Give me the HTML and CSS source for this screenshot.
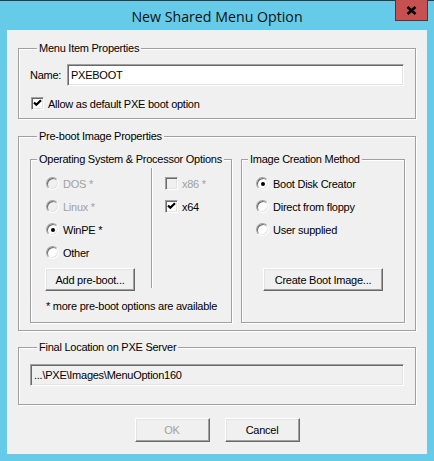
FILE: index.html
```html
<!DOCTYPE html>
<html>
<head>
<meta charset="utf-8">
<title>New Shared Menu Option</title>
<link rel="stylesheet" href="styles.css">
</head>
<body>
<div class="window">
  <div class="titlebar">
    <span class="title">New Shared Menu Option</span>
    <div class="close">
      <svg width="11" height="9" viewBox="0 0 11 9"><path d="M1.5 1 L9.5 8 M9.5 1 L1.5 8" stroke="#000" stroke-width="2.6" fill="none"/></svg>
    </div>
  </div>
  <div class="client">
    <div class="group g-menu">
      <div class="legend">Menu Item Properties</div>
      <div class="name-row">
        <span class="name-label">Name:</span>
        <div class="textbox">PXEBOOT</div>
      </div>
      <div class="check-row">
        <span class="checkbox"><svg width="9" height="9" viewBox="0 0 9 9"><path d="M1 3.5 L3.3 5.8 L8 1.2" stroke="#000" stroke-width="2.2" fill="none"/></svg></span>
        <span>Allow as default PXE boot option</span>
      </div>
    </div>

    <div class="group g-preboot">
      <div class="legend">Pre-boot Image Properties</div>
      <div class="subgroups">
        <div class="group g-os">
          <div class="legend sub">Operating System &amp; Processor Options</div>
          <div class="os-grid">
            <div class="os-left">
              <div class="opt disabled"><span class="radio"></span>DOS *</div>
              <div class="opt disabled"><span class="radio"></span>Linux *</div>
              <div class="opt"><span class="radio on"></span>WinPE *</div>
              <div class="opt"><span class="radio"></span>Other</div>
              <div class="btn btn-add">Add pre-boot...</div>
            </div>
            <div class="os-right">
              <div class="opt disabled"><span class="checkbox off"></span>x86 *</div>
              <div class="opt"><span class="checkbox"><svg width="9" height="9" viewBox="0 0 9 9"><path d="M1 3.5 L3.3 5.8 L8 1.2" stroke="#000" stroke-width="2.2" fill="none"/></svg></span>x64</div>
            </div>
          </div>
          <div class="note">* more pre-boot options are available</div>
        </div>
        <div class="group g-image">
          <div class="legend sub">Image Creation Method</div>
          <div class="image-col">
            <div class="opt"><span class="radio on"></span>Boot Disk Creator</div>
            <div class="opt"><span class="radio"></span>Direct from floppy</div>
            <div class="opt"><span class="radio"></span>User supplied</div>
            <div class="btn btn-create">Create Boot Image...</div>
          </div>
        </div>
      </div>
    </div>

    <div class="group g-final">
      <div class="legend">Final Location on PXE Server</div>
      <div class="textbox readonly">...\PXE\Images\MenuOption160</div>
    </div>

    <div class="buttons">
      <div class="btn btn-dlg disabled">OK</div>
      <div class="btn btn-dlg">Cancel</div>
    </div>
  </div>
</div>
</body>
</html>
```

FILE: styles.css
```css
* { box-sizing: border-box; }

html, body {
  margin: 0;
  padding: 0;
  background: #65cbe9;
}

body {
  font-family: "Liberation Sans", Arial, sans-serif;
  font-size: 11px;
  letter-spacing: -0.25px;
  color: #000;
}

.window {
  position: relative;
  width: 434px;
  height: 461px;
  background: #65cbe9;
  border-top: 1px solid #2e3a40;
}

.titlebar {
  height: 29px;
  display: flex;
  align-items: center;
  justify-content: center;
}

.title {
  font-family: "Open Sans", "Noto Sans", sans-serif;
  font-size: 14.2px;
  letter-spacing: 0;
  color: #111;
  padding-top: 2px;
}

.close {
  position: absolute;
  top: -1px;
  right: 6px;
  width: 33px;
  height: 21px;
  background: #c75050;
  border: 1px solid #5e3030;
  border-top: none;
  display: flex;
  align-items: center;
  justify-content: center;
}

.client {
  margin: 0 7px;
  height: 424px;
  background: #f0f0f0;
  padding: 18px 11px 0 11px;
  overflow: hidden;
}

/* group boxes */
.group {
  border: 1px solid #a0a0a0;
  box-shadow: inset 1px 1px 0 #fff, 1px 1px 0 #fff;
}

.legend {
  width: fit-content;
  height: 13px;
  line-height: 13px;
  margin: -7px 0 0 7px;
  padding: 0 2px;
  background: #f0f0f0;
  white-space: nowrap;
}

.legend.sub {
  margin-left: 6px;
}

/* Menu item group */
.g-menu {
  padding: 0 11px 8px 11px;
}

.name-row {
  display: flex;
  align-items: center;
  margin-top: 9px;
  height: 22px;
}

.name-label {
  width: 37px;
  flex: none;
}

.textbox {
  flex: 1;
  height: 22px;
  line-height: 20px;
  padding: 0 3px;
  background: #fff;
  border: 1px solid;
  border-color: #a0a0a0 #fff #fff #a0a0a0;
  box-shadow: inset 1px 1px 0 #696969, inset -1px -1px 0 #e3e3e3;
  white-space: nowrap;
}

.textbox.readonly {
  background: #f0f0f0;
  margin-top: 10px;
}

.check-row {
  display: flex;
  align-items: center;
  height: 13px;
  margin-top: 11px;
  padding-left: 1px;
}

.checkbox {
  flex: none;
  width: 13px;
  height: 13px;
  margin-right: 4px;
  background: #fff;
  border: 1px solid;
  border-color: #a0a0a0 #fff #fff #a0a0a0;
  box-shadow: inset 1px 1px 0 #696969, inset -1px -1px 0 #e3e3e3;
  display: flex;
  align-items: center;
  justify-content: center;
}

.checkbox svg {
  display: block;
}

.checkbox.off {
  background: #f0f0f0;
}

.radio {
  flex: none;
  width: 13px;
  height: 13px;
  margin-right: 4px;
  border-radius: 50%;
  background: #fff;
  border: 1px solid;
  border-color: #a0a0a0 #fff #fff #a0a0a0;
  box-shadow: inset 1px 1px 0 #696969, inset -1px -1px 0 #e3e3e3;
  display: flex;
  align-items: center;
  justify-content: center;
}

.radio.on::after {
  content: "";
  width: 4px;
  height: 4px;
  border-radius: 50%;
  background: #000;
}

.disabled {
  color: #a0a0a0;
}

.disabled .radio {
  background: #f0f0f0;
}

/* Pre-boot group */
.g-preboot {
  margin-top: 17px;
  padding: 0 10px 7px 11px;
}

.subgroups {
  display: flex;
  gap: 9px;
  margin-top: 16px;
}

.g-os {
  width: 202px;
  flex: none;
  padding-bottom: 9px;
}

.os-grid {
  display: flex;
  margin-top: 2px;
}

.os-left {
  width: 120px;
  padding: 4px 0 0 15px;
}

.opt {
  display: flex;
  align-items: center;
  height: 23px;
  white-space: nowrap;
}

.os-right {
  height: 120px;
  padding: 4px 0 0 13px;
  border-left: 1px solid #a0a0a0;
  box-shadow: inset 1px 0 0 #fff;
}

.note {
  margin-top: 9px;
  padding-left: 15px;
  height: 13px;
  line-height: 13px;
  white-space: nowrap;
}

.g-image {
  flex: 1;
}

.image-col {
  display: flex;
  flex-direction: column;
  padding-top: 6px;
}

.image-col .opt {
  padding-left: 14px;
}

/* buttons */
.btn {
  height: 23px;
  display: flex;
  align-items: center;
  justify-content: center;
  background: #f0f0f0;
  border: 1px solid;
  border-color: #fff #696969 #696969 #fff;
  box-shadow: inset -1px -1px 0 #a0a0a0, inset 1px 1px 0 #e3e3e3;
  white-space: nowrap;
}

.btn-add {
  width: 90px;
  margin: 4px 0 0 -1px;
}

.btn-create {
  width: 120px;
  margin: 27px auto 0 auto;
}

/* final location */
.g-final {
  margin-top: 16px;
  padding: 0 11px 18px 11px;
}

.buttons {
  display: flex;
  justify-content: center;
  gap: 15px;
  margin-top: 13px;
}

.btn-dlg {
  width: 75px;
  height: 24px;
}
```
